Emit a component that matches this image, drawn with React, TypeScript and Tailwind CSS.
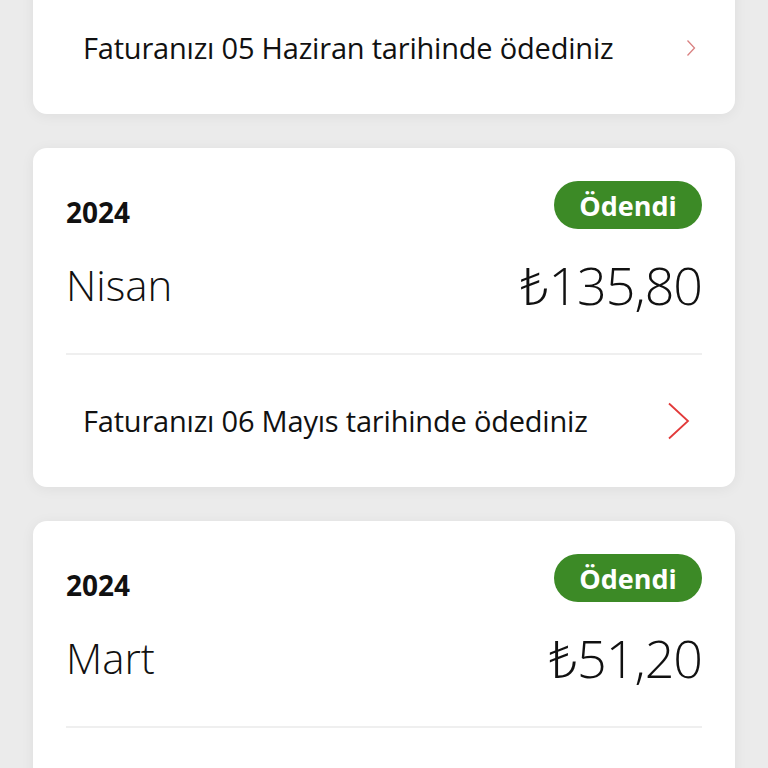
import React from 'react'

type Bill = {
  year: string
  month: string
  amount: string
  paidText: string
  clipped?: boolean
}

const bills: Bill[] = [
  { year: '2024', month: 'Mayıs', amount: '₺135,80', paidText: 'Faturanızı 05 Haziran tarihinde ödediniz', clipped: true },
  { year: '2024', month: 'Nisan', amount: '₺135,80', paidText: 'Faturanızı 06 Mayıs tarihinde ödediniz' },
  { year: '2024', month: 'Mart', amount: '₺51,20', paidText: 'Faturanızı 05 Nisan tarihinde ödediniz' },
]

function Chevron({ small }: { small?: boolean }) {
  if (small) {
    return (
      <svg width="10" height="18" viewBox="0 0 10 18" fill="none" className="mr-[6px]">
        <path d="M1.5 1.5 L8.5 9 L1.5 16.5" stroke="#d98080" strokeWidth="1.3" />
      </svg>
    )
  }
  return (
    <svg width="24" height="38" viewBox="0 0 24 38" fill="none" className="mr-[11px]">
      <path d="M2 1.5 L21 19 L2 36.5" stroke="#e23a3a" strokeWidth="1.8" />
    </svg>
  )
}

function PaidRow({ text, small }: { text: string; small?: boolean }) {
  return (
    <div className="h-[132px] flex items-center justify-between pl-[17px]">
      <span className="text-[29px] tracking-[-0.2px] text-[#111]">{text}</span>
      <Chevron small={small} />
    </div>
  )
}

function BillCard({ bill }: { bill: Bill }) {
  if (bill.clipped) {
    // only the bottom row is still in view, the rest is scrolled away
    return (
      <div className="bg-white rounded-b-[14px] shadow-[0_2px_14px_rgba(0,0,0,0.06)] px-[33px]">
        <div className="border-t-2 border-[#efefef]" />
        <PaidRow text={bill.paidText} small />
      </div>
    )
  }
  return (
    <div className="bg-white rounded-[14px] shadow-[0_2px_14px_rgba(0,0,0,0.06)] px-[33px]">
      <div className="pt-[33px] pb-[35px] border-b-2 border-[#efefef]">
        <div className="flex items-center justify-between h-[48px]">
          <span className="text-[28px] font-bold text-[#111] leading-none mt-[14px]">{bill.year}</span>
          <span className="bg-[#3c8a26] text-white text-[27px] font-bold rounded-full h-[48px] w-[148px] flex items-center justify-center leading-none">
            Ödendi
          </span>
        </div>
        <div className="flex items-center justify-between mt-[23px] h-[66px]">
          <span className="text-[42px] font-light text-[#111] leading-none">{bill.month}</span>
          <span className="text-[52px] font-light text-[#111] leading-none tracking-[-1px]">{bill.amount}</span>
        </div>
      </div>
      <PaidRow text={bill.paidText} />
    </div>
  )
}

export default function App() {
  return (
    <div
      className="w-[768px] h-[768px] overflow-hidden bg-[#ebebeb]"
      style={{ fontFamily: '"Open Sans", "Noto Sans", sans-serif' }}
    >
      <div className="flex flex-col gap-[34px] px-[33px] mt-[-20px]">
        {bills.map((b, i) => (
          <BillCard key={i} bill={b} />
        ))}
      </div>
    </div>
  )
}
